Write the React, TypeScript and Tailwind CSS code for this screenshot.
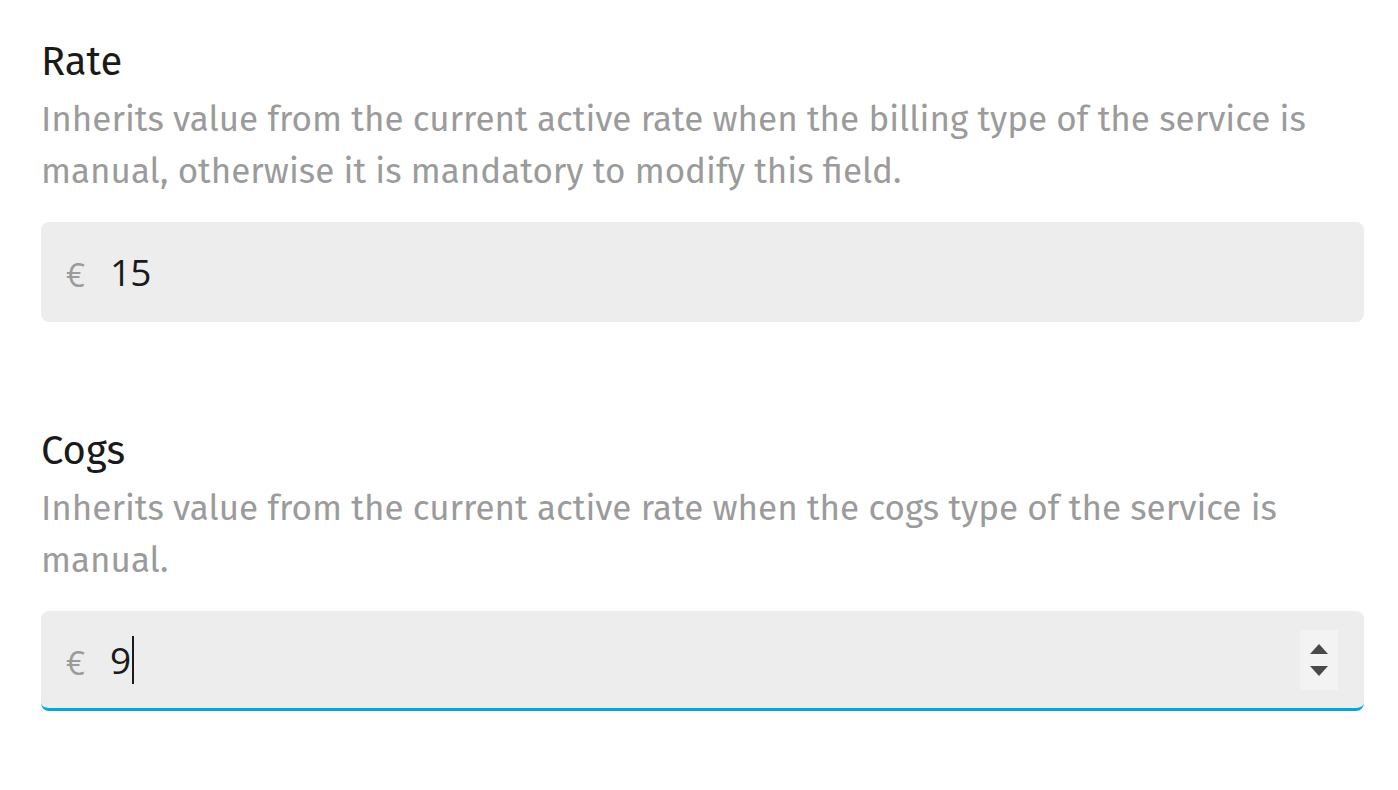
import React from 'react';

interface FieldProps {
  label: string;
  description: string[];
  value: string;
  focused?: boolean;
}

function CurrencyField({ label, description, value, focused }: FieldProps) {
  return (
    <div className="flex flex-col">
      <h3 className="text-[40px] leading-[52px] text-[#1a1a1a]">{label}</h3>
      <p className="mt-[5px] text-[35px] leading-[52px] text-[#9b9b9b]">
        {description.map((line, i) => (
          <span key={i} className="block">
            {line}
          </span>
        ))}
      </p>
      <div
        className={`mt-[25px] flex h-[100px] items-center rounded-[8px] bg-[#ededed] pl-[25px] pr-[26px] ${
          focused ? 'border-b-[3px] border-[#00a9d9]' : ''
        }`}
        style={{ fontFamily: '"Open Sans", "Noto Sans", sans-serif' }}
      >
        <span className="w-[44px] pt-[6px] text-[33px] text-[#9b9b9b]">€</span>
        <span className="flex items-center text-[37px] tracking-[-1px] text-[#1a1a1a]">
          {value}
          {focused && <span className="ml-[2px] h-[48px] w-[2px] bg-[#1a1a1a]" />}
        </span>
        {focused && (
          <div className="ml-auto flex h-[60px] w-[38px] flex-col items-center justify-center gap-[10px] bg-[#f3f3f3]">
            <svg width="20" height="12" viewBox="0 0 20 12">
              <path d="M10 1 L19 11 L1 11 Z" fill="#4a4a4a" />
            </svg>
            <svg width="20" height="12" viewBox="0 0 20 12">
              <path d="M1 1 L19 1 L10 11 Z" fill="#4a4a4a" />
            </svg>
          </div>
        )}
      </div>
    </div>
  );
}

export default function App() {
  return (
    <div
      className="min-h-screen bg-white px-[41px] pt-[36px]"
      style={{ fontFamily: '"Fira Sans", "Open Sans", sans-serif' }}
    >
      <div className="flex w-[1323px] flex-col gap-[103px]">
        <CurrencyField
          label="Rate"
          description={[
            'Inherits value from the current active rate when the billing type of the service is',
            'manual, otherwise it is mandatory to modify this field.',
          ]}
          value="15"
        />
        <CurrencyField
          label="Cogs"
          description={[
            'Inherits value from the current active rate when the cogs type of the service is',
            'manual.',
          ]}
          value="9"
          focused
        />
      </div>
    </div>
  );
}
